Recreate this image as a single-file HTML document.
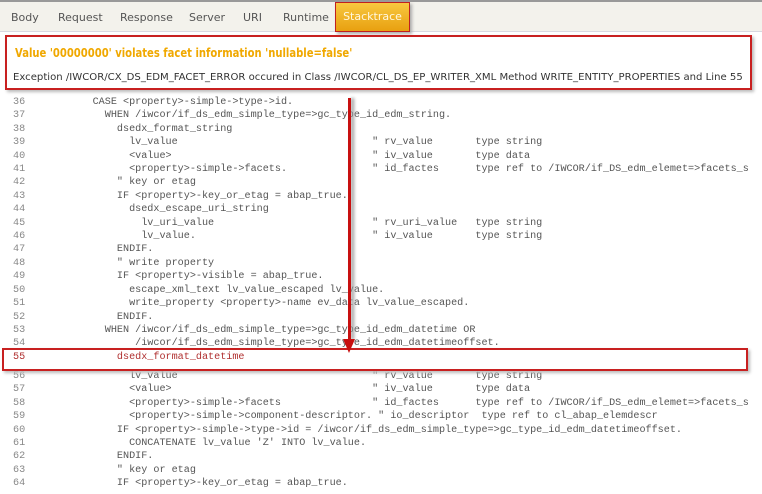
<!DOCTYPE html>
<html><head><style>
body{margin:0;width:762px;height:494px;background:#fff;overflow:hidden;position:relative;font-family:"DejaVu Sans","Liberation Sans",sans-serif}
.top{position:absolute;left:0;top:0;width:762px;height:2px;background:#999}
.tabs{position:absolute;left:0;top:2px;width:762px;height:29px;background:#f3f2ec;border-bottom:1px solid #d8d8e0}
.tab{position:absolute;top:9px;font-size:11px;color:#555}
.st{position:absolute;left:335px;top:2px;width:73px;height:28px;background:linear-gradient(#f8c840,#e8a010);border:1px solid #c02020;box-shadow:2px 2px 3px #aaa;color:#fff8e0;font-size:11px;text-align:center;line-height:28px}
.box1{position:absolute;left:5px;top:35px;width:743px;height:51px;border:2px solid #c82020;box-shadow:2px 2px 3px #bbb}
.h{position:absolute;left:8px;top:9px;font-size:12px;font-weight:bold;color:#f0a800;white-space:nowrap;transform:scaleX(0.835);transform-origin:0 0}
.ex{position:absolute;left:6px;top:35px;font-size:10.1px;color:#333;white-space:nowrap}
pre{position:absolute;margin:0;font-family:"Liberation Mono",monospace;font-size:10.15px;line-height:13.4px;color:#555}
.ln{left:13px;color:#888}
.code{left:44px}
.a{top:96px}.b{top:370px}
.r{color:#b03030}
.box2{position:absolute;left:2px;top:348px;width:742px;height:19px;border:2px solid #c82020;box-shadow:2px 2px 3px #bbb}
.arr{position:absolute;left:348px;top:98px;width:3px;height:242px;background:#c81010;box-shadow:3px 0 3px #999}
.ah{position:absolute;left:343px;top:339px;width:0;height:0;border-left:6.5px solid transparent;border-right:6.5px solid transparent;border-top:14px solid #c81010}
</style></head><body>
<div class="top"></div>
<div class="tabs">
<span class="tab" style="left:11px">Body</span>
<span class="tab" style="left:58px">Request</span>
<span class="tab" style="left:120px">Response</span>
<span class="tab" style="left:189px">Server</span>
<span class="tab" style="left:243px">URI</span>
<span class="tab" style="left:283px">Runtime</span>
</div>
<div class="st">Stacktrace</div>
<div class="box1"><div class="h">Value '00000000' violates facet information 'nullable=false'</div>
<div class="ex">Exception /IWCOR/CX_DS_EDM_FACET_ERROR occured in Class /IWCOR/CL_DS_EP_WRITER_XML Method WRITE_ENTITY_PROPERTIES and Line 55</div></div>
<pre class="ln a">36
37
38
39
40
41
42
43
44
45
46
47
48
49
50
51
52
53
54
<span class="r">55</span></pre>
<pre class="ln b">56
57
58
59
60
61
62
63
64</pre>
<pre class="code a">        CASE &lt;property&gt;-simple-&gt;type-&gt;id.
          WHEN /iwcor/if_ds_edm_simple_type=&gt;gc_type_id_edm_string.
            dsedx_format_string
              lv_value                                " rv_value       type string
              &lt;value&gt;                                 " iv_value       type data
              &lt;property&gt;-simple-&gt;facets.              " id_factes      type ref to /IWCOR/if_DS_edm_elemet=&gt;facets_s
            " key or etag
            IF &lt;property&gt;-key_or_etag = abap_true.
              dsedx_escape_uri_string
                lv_uri_value                          " rv_uri_value   type string
                lv_value.                             " iv_value       type string
            ENDIF.
            " write property
            IF &lt;property&gt;-visible = abap_true.
              escape_xml_text lv_value_escaped lv_value.
              write_property &lt;property&gt;-name ev_data lv_value_escaped.
            ENDIF.
          WHEN /iwcor/if_ds_edm_simple_type=&gt;gc_type_id_edm_datetime OR
               /iwcor/if_ds_edm_simple_type=&gt;gc_type_id_edm_datetimeoffset.
<span class="r">            dsedx_format_datetime</span></pre>
<pre class="code b">              lv_value                                " rv_value       type string
              &lt;value&gt;                                 " iv_value       type data
              &lt;property&gt;-simple-&gt;facets               " id_factes      type ref to /IWCOR/if_DS_edm_elemet=&gt;facets_s
              &lt;property&gt;-simple-&gt;component-descriptor. " io_descriptor  type ref to cl_abap_elemdescr
            IF &lt;property&gt;-simple-&gt;type-&gt;id = /iwcor/if_ds_edm_simple_type=&gt;gc_type_id_edm_datetimeoffset.
              CONCATENATE lv_value 'Z' INTO lv_value.
            ENDIF.
            " key or etag
            IF &lt;property&gt;-key_or_etag = abap_true.</pre>
<div class="box2"></div>
<div class="arr"></div>
<div class="ah"></div>
</body></html>
